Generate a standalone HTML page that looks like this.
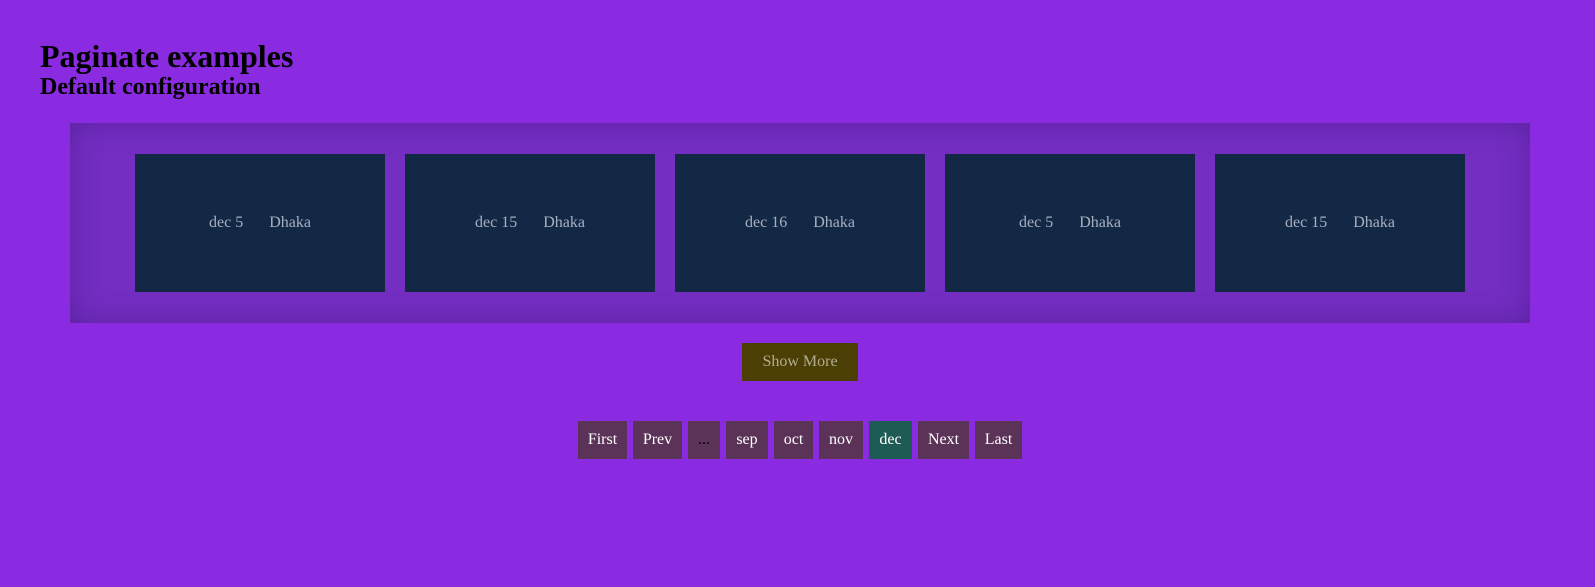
<!DOCTYPE html>
<html><head><style>
body{margin:0;background:#8a2be2;font-family:"Liberation Serif",serif;width:1595px;height:587px;overflow:hidden;position:relative}
h1{position:absolute;left:40px;top:36px;margin:0;font-size:32px;font-weight:bold;line-height:40px}
h2{position:absolute;left:40px;top:72px;margin:0;font-size:24px;font-weight:bold;line-height:30px}
.wrap{position:absolute;left:70px;top:123px;width:1460px;height:200px;background:#742ec2;box-shadow:inset 0 0 30px rgba(60,20,120,.45)}
.card{position:absolute;top:31px;width:250px;height:138px;background:#122845;color:#a7afc0;font-size:16px;display:flex;align-items:center;justify-content:center;gap:26px}
.btn{position:absolute;left:742px;top:343px;width:116px;height:38px;background:#4b3f06;color:#b3ad8f;font-size:16px;display:flex;align-items:center;justify-content:center}
.pg{position:absolute;top:421px;height:38px;background:#5c3358;color:#fff;font-size:16px;display:flex;align-items:center;justify-content:center}
</style></head><body>
<h1>Paginate examples</h1>
<h2>Default configuration</h2>
<div class="wrap">
<div class="card" style="left:65px"><span>dec 5</span><span>Dhaka</span></div>
<div class="card" style="left:335px"><span>dec 15</span><span>Dhaka</span></div>
<div class="card" style="left:605px"><span>dec 16</span><span>Dhaka</span></div>
<div class="card" style="left:875px"><span>dec 5</span><span>Dhaka</span></div>
<div class="card" style="left:1145px"><span>dec 15</span><span>Dhaka</span></div>
</div>
<div class="btn">Show More</div>
<div class="pg" style="left:578px;width:49px">First</div>
<div class="pg" style="left:633px;width:49px">Prev</div>
<div class="pg" style="left:688px;width:32px;color:#000">...</div>
<div class="pg" style="left:726px;width:42px">sep</div>
<div class="pg" style="left:774px;width:39px">oct</div>
<div class="pg" style="left:819px;width:44px">nov</div>
<div class="pg" style="left:869px;width:43px;background:#1e5b55">dec</div>
<div class="pg" style="left:918px;width:51px">Next</div>
<div class="pg" style="left:975px;width:47px">Last</div>
</body></html>
